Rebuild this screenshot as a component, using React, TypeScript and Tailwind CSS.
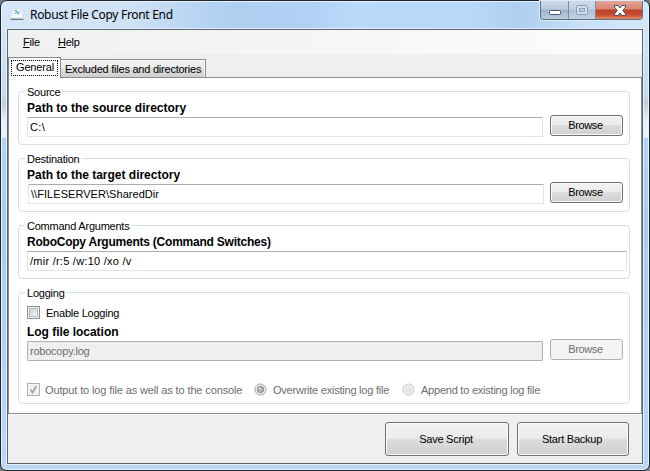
import type { ReactNode } from "react";

function Group({ title, className, children }: { title: string; className: string; children: ReactNode }) {
  return (
    <fieldset className={`rounded-[4px] border border-[#d5dfe5] pl-[6px] ${className}`}>
      <legend className="h-[13px] px-[2px] leading-[14px]">{title}</legend>
      <div className="pl-[2px]">{children}</div>
    </fieldset>
  );
}

function Bold({ children, className = "" }: { children: ReactNode; className?: string }) {
  return <div className={`mb-[3px] h-[13px] text-[12px] leading-[14px] font-bold ${className}`}>{children}</div>;
}

function Field({ value, className = "", disabled }: { value: string; className?: string; disabled?: boolean }) {
  return (
    <div
      className={`h-[20px] rounded-[1px] border pl-[2px] leading-[19px] whitespace-pre ${
        disabled
          ? "border-[#afafaf] bg-[#efefef] text-[#6d6d6d]"
          : "border-[#e2e3ea] border-t-[#abadb3] bg-white"
      } ${className}`}
    >
      {value}
    </div>
  );
}

function Button({ label, className, disabled }: { label: string; className: string; disabled?: boolean }) {
  return (
    <button
      className={`flex shrink-0 items-center justify-center rounded-[3px] border pr-[2px] ${
        disabled
          ? "border-[#adb2b5] bg-[#f4f4f4] text-[#6d6d6d]"
          : "border-[#707070] bg-[linear-gradient(#f2f2f2_0%,#ebebeb_48%,#dddddd_50%,#cfcfcf_100%)] shadow-[inset_0_0_0_1px_#fafafa]"
      } ${className}`}
    >
      {label}
    </button>
  );
}

function AppIcon() {
  return (
    <svg width="14" height="13" viewBox="0 0 14 13">
      <path d="M3 0.5h8l2 8H1z" fill="#f1f3f6" stroke="#d3dae2" strokeWidth="0.6" />
      <path d="M0.5 8h13v3h-13z" fill="#dfe2e6" />
      <path d="M0.5 11.3h13" stroke="#55585e" />
      <path d="M4 3.2l2-1 1.5 2.300 2.500-.5M5 5.500l2-1 2 1.700" fill="none" stroke="#68aace" strokeWidth="1.1" />
      <path d="M1.500 8.500h11" stroke="#fff" />
    </svg>
  );
}

function Caption() {
  return (
    <div className="flex h-[19px] w-[103px] rounded-b-[4px] border border-t-0 border-[#5f6b7b] shadow-[0_0_0_1px_#dcebfa]">
      <div className="flex w-[27px] items-center justify-center rounded-bl-[3px] bg-[linear-gradient(#cbd9e9_0%,#bccbdc_45%,#9fb1c7_50%,#b8cce0_100%)]">
        <svg width="13" height="6" className="mt-[5px] ml-[2px]">
          <rect x="0.5" y="0.5" width="11" height="4" rx="1" fill="#fff" stroke="#4d5667" />
        </svg>
      </div>
      <div className="flex w-[28px] items-center justify-center border-x border-[#7d8b9f] bg-[linear-gradient(#cddced_0%,#c1d2e4_45%,#adbfd4_50%,#bfd3e7_100%)]">
        <svg width="12" height="10">
          <rect x="0.5" y="0.5" width="11" height="9" rx="1" fill="#cfdeed" stroke="#8e9eb1" />
          <rect x="3.5" y="3.5" width="5" height="3" fill="#bfd0e2" stroke="#8e9eb1" />
        </svg>
      </div>
      <div className="flex flex-1 items-center justify-center rounded-br-[3px] bg-[linear-gradient(#e3a698_0%,#d88573_45%,#c04028_50%,#c64b32_75%,#e08a65_100%)]">
        <svg width="12" height="11" viewBox="0 0 12 11" className="mt-[1px] ml-[2px]">
          <path
            d="M.5.500h3.500l2 2.500 2-2.500h3.500v1.500l-2.700 3.500 2.700 3.500v1.500H8L6 8l-2 2.500H.5V9l2.700-3.500L.5 2z"
            fill="#fff"
            stroke="#534f60"
          />
        </svg>
      </div>
    </div>
  );
}

function Radio({ checked }: { checked?: boolean }) {
  return (
    <svg width="13" height="13" className="shrink-0">
      <circle cx="6.500" cy="6.500" r="5.500" fill="#f3f3f3" stroke={checked ? "#a0a0a0" : "#c4c4c4"} />
      {checked ? (
        <>
          <circle cx="6.500" cy="6.500" r="3.200" fill="#b0b0b0" stroke="#858585" />
          <circle cx="5.800" cy="5.800" r="1.300" fill="#d8d8d8" />
        </>
      ) : (
        <circle cx="6.500" cy="6.500" r="3.500" fill="#e6e6e6" />
      )}
    </svg>
  );
}

export default function App() {
  return (
    <div className="h-[471px] w-[650px] overflow-hidden bg-[#777b80] font-['Liberation_Sans',Arial,sans-serif] text-[11px] leading-[13px] tracking-[-0.23px] text-black">
      <div className="h-[471px] w-[650px] rounded-[7px] border border-[#20222b] bg-[linear-gradient(#d8e8f8_0px,#c6dcf3_90px,#c1cfdc_103px,#e4f0fb_120px,#edf5fd_136px,#b2d4f8_137px,#a8ccef_220px,#bad8f8_471px)] shadow-[inset_0_0_0_1px_#e8f4ff]">
        <header className="mx-[1px] mt-[1px] flex h-[27px] rounded-t-[5px] bg-[linear-gradient(90deg,#d6e6f8_0%,#cfe1f5_20%,#bcd6f2_28%,#b0d0f2_35%,#b0d1f3_48%,#b9dafb_54%,#b7d8f8_73%,#b0cfee_80%,#c7e0f8_90%,#d3e7fb_100%)]">
          <div className="flex flex-1 pt-[6px] pl-[8px]">
            <AppIcon />
            <span className="-mt-[1px] ml-[6px] font-['Noto_Sans',sans-serif] text-[12px] leading-[15px] tracking-[-0.31px]">
              Robust File Copy Front End
            </span>
          </div>
          <div className="-mt-[1px] mr-[5px]">
            <Caption />
          </div>
        </header>

        <main className="ml-[6px] flex h-[435px] w-[636px] flex-col border border-[#5c6673] bg-[#efefef] shadow-[0_0_0_1px_#e3f0fd]">
          <nav className="flex h-[24px] shrink-0 gap-[18px] bg-[linear-gradient(90deg,#f0f0f0,#fcfcfc)] pt-[6px] pl-[15px]">
            <span className="w-[17px]"><u>F</u>ile</span>
            <span><u>H</u>elp</span>
          </nav>

          <div className="flex h-[24px] shrink-0 items-end border-b border-[#898c95]">
            <div className="relative z-10 -mb-px h-[21px] w-[53px] border border-b-0 border-[#898c95] bg-white p-[2px]">
              <div className="h-[16px] w-[47px] border border-dotted border-black pl-[4px] leading-[13px] tracking-[-0.15px]">General</div>
            </div>
            <div className="h-[18px] w-[145px] border border-b-0 border-l-0 border-[#898c95] bg-[linear-gradient(#f2f2f2_0%,#ebebeb_48%,#dddddd_50%,#cfcfcf_100%)] pl-[4px] leading-[19px] whitespace-nowrap shadow-[inset_-1px_1px_0_#fafafa]">
              Excluded files and directories
            </div>
          </div>

          <section className="flex h-[336px] shrink-0 flex-col gap-[7px] border border-t-0 border-[#898c95] bg-white pt-[7px] pl-[9px]">
            <Group title="Source" className="h-[60px] w-[612px]">
              <div className="flex">
                <div className="w-[516px] pt-[3px]">
                  <Bold className="tracking-[-0.01px]">Path to the source directory</Bold>
                  <Field value={"C:\\"} className="tracking-[0.4px]" />
                </div>
                <Button label="Browse" className="mt-[17px] ml-[7px] h-[21px] w-[73px] tracking-[-0.4px]" />
              </div>
            </Group>

            <Group title="Destination" className="h-[60px] w-[612px]">
              <div className="flex">
                <div className="w-[517px] pt-[3px]">
                  <Bold className="tracking-[-0.01px]">Path to the target directory</Bold>
                  <Field value={"\\\\FILESERVER\\SharedDir"} className="ml-px tracking-[0.05px]" />
                </div>
                <Button label="Browse" className="mt-[17px] ml-[6px] h-[21px] w-[73px] tracking-[-0.4px]" />
              </div>
            </Group>

            <Group title="Command Arguments" className="h-[60px] w-[612px]">
              <div className="w-[600px] pt-[3px]">
                <Bold className="tracking-[-0.23px]">RoboCopy Arguments (Command Switches)</Bold>
                <Field value="/mir /r:5 /w:10 /xo /v" className="tracking-[0.25px]" />
              </div>
            </Group>

            <Group title="Logging" className="h-[118px] w-[612px]">
              <div className="mt-[7px] flex h-[13px]">
                <span className="h-[13px] w-[13px] border border-[#8e8f8f] bg-[#f4f4f4] p-[1px]">
                  <span className="block h-[9px] w-[9px] border border-[#b3b8be] bg-[linear-gradient(135deg,#cdd1d6,#f6f6f6)]" />
                </span>
                <span className="ml-[6px] leading-[14px]">Enable Logging</span>
              </div>
              <div className="flex">
                <div className="w-[516px] pt-[6px]">
                  <Bold className="tracking-[-0.03px]">Log file location</Bold>
                  <Field value="robocopy.log" disabled />
                </div>
                <Button label="Browse" disabled className="mt-[20px] ml-[7px] h-[21px] w-[73px] tracking-[-0.4px]" />
              </div>
              <div className="mt-[22px] flex h-[13px] leading-[14px] whitespace-nowrap text-[#6d6d6d]">
                <span className="h-[13px] w-[13px] shrink-0 border border-[#b1b1b1] bg-[#f2f2f2]">
                  <svg width="11" height="11">
                    <path d="M2.5 5.5l2 3 4-6.5" fill="none" stroke="#a5a5a5" strokeWidth="1.8" />
                  </svg>
                </span>
                <span className="ml-[5px] w-[209px] tracking-[-0.13px]">Output to log file as well as to the console</span>
                <Radio checked />
                <span className="ml-[6px] w-[129px]">Overwrite existing log file</span>
                <Radio />
                <span className="ml-[6px]">Append to existing log file</span>
              </div>
            </Group>
          </section>

          <footer className="flex flex-1 justify-end gap-[8px] border-t border-white pt-[7px] pr-[13px]">
            <Button label="Save Script" className="h-[34px] w-[124px]" />
            <Button label="Start Backup" className="h-[34px] w-[112px]" />
          </footer>
        </main>
      </div>
    </div>
  );
}
